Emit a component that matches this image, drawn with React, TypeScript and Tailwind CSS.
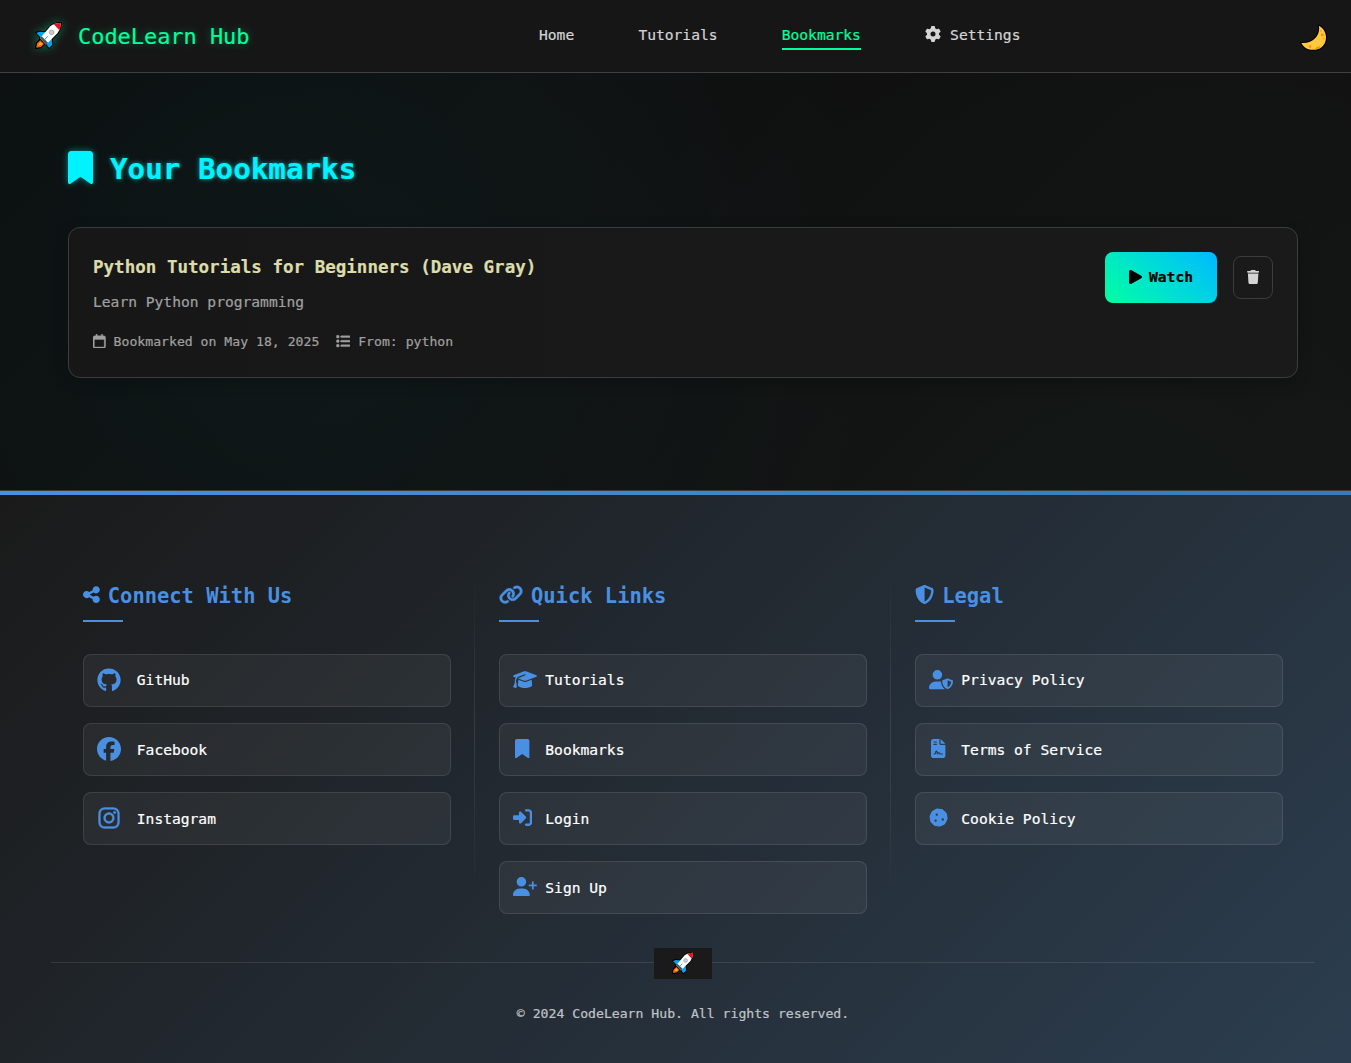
import type { ReactNode } from 'react';
import {
  FaBookmark, FaCookie, FaFacebook, FaFileContract, FaGear, FaGithub, FaGraduationCap, FaInstagram,
  FaLink, FaList, FaPlay, FaRegCalendar, FaRightToBracket, FaShareNodes, FaShieldHalved, FaTrash,
  FaUserPlus, FaUserShield,
} from 'react-icons/fa6';

function Rocket({ className }: { className: string }) {
  return (
    <svg viewBox="0 0 81 81" className={className}>
      <g stroke="#000" strokeWidth="6" strokeLinejoin="round">
        <path d="M3 78 L5 64 L15 53 L28 66 L18 76 Z" fill="#f7630c" />
        <path d="M4 32 L14 29 L32 31 L20 47 L13 43 Z" fill="#00a4ef" />
        <path d="M50 48 L52 68 L43 77 L37 72 L36 62 Z" fill="#00a4ef" />
        <path d="M15 49 L46 13 Q58 3 78 3 Q77 21 68 33 L33 68 Z" fill="#fff" />
      </g>
      <path d="M4 33 L14 29 L32 31 L20 47 L13 43 Z" fill="#00a4ef" />
      <path d="M50 48 L52 68 L43 77 L37 72 L36 62 Z" fill="#00a4ef" />
      <path d="M4 77 L6 64 L16 55 L27 66 L18 75 Z" fill="#f7630c" />
      <path d="M9 71 L16 60 L23 67 Z" fill="#fcb827" />
      <path d="M15 49 L46 13 Q58 3 78 3 Q77 21 68 33 L33 68 Z" fill="#fff" />
      <path d="M56 6 Q66 3 78 3 Q77 15 73 25 Z" fill="#e81224" />
      <path d="M15 49 L20 43 L39 62 L33 68 Z" fill="#4a5459" />
      <circle cx="50" cy="31" r="7" fill="#cccccc" stroke="#a5a5a5" strokeWidth="2.5" />
      <path d="M28 54 L38 43" stroke="#00a4ef" strokeWidth="3" />
    </svg>
  );
}

function Moon() {
  return (
    <svg viewBox="0 0 80 80" className="h-[27px] w-[27px]">
      <path d="M56 5 C82 18 84 55 62 70 C42 82 14 77 4 56 C32 60 62 38 56 5 Z" fill="#ffc83d" stroke="#000" strokeWidth="7" strokeLinejoin="round" />
      <path d="M56 5 C82 18 84 55 62 70 C42 82 14 77 4 56 C32 60 62 38 56 5 Z" fill="#ffc83d" />
      <g fill="#eb9e0c">
        <circle cx="66" cy="32" r="4.5" />
        <circle cx="62" cy="20" r="2.5" />
        <circle cx="70" cy="43" r="2.5" />
        <path d="M44 75 Q49 64 58 66 Q61 69 58 72 Q52 76 44 75 Z" />
        <circle cx="30" cy="67" r="4" />
      </g>
    </svg>
  );
}

type Item = { label: string; icon: ReactNode };

const wideGlyph = 'h-[19.2px] w-6 shrink-0';
const squareGlyph = 'size-[19.2px] shrink-0';
const narrowGlyph = 'h-[19.2px] w-[14.4px] shrink-0';

const social: Item[] = [
  { label: 'GitHub', icon: <FaGithub className="size-6" /> },
  { label: 'Facebook', icon: <FaFacebook className="size-6" /> },
  { label: 'Instagram', icon: <FaInstagram className="size-6 stroke-current stroke-[8]" /> },
];
const quick: Item[] = [
  { label: 'Tutorials', icon: <FaGraduationCap className={wideGlyph} /> },
  { label: 'Bookmarks', icon: <FaBookmark className={narrowGlyph} /> },
  { label: 'Login', icon: <FaRightToBracket className={squareGlyph} /> },
  { label: 'Sign Up', icon: <FaUserPlus className={wideGlyph} /> },
];
const legal: Item[] = [
  { label: 'Privacy Policy', icon: <FaUserShield className={wideGlyph} /> },
  { label: 'Terms of Service', icon: <FaFileContract className={narrowGlyph} /> },
  { label: 'Cookie Policy', icon: <FaCookie className={squareGlyph} /> },
];

function Column({ title, icon, items, wide, divider }: { title: string; icon: ReactNode; items: Item[]; wide?: boolean; divider?: boolean }) {
  return (
    <section className="relative">
      <h3 className="flex h-[35px] items-start gap-2 text-[20.46px] leading-7 font-bold text-[#4a90e2] [-webkit-text-stroke:0px]">
        <span className="mt-[3px]">{icon}</span>
        {title}
      </h3>
      <div className="mt-[3px] h-0.5 w-10 bg-[#4a90e2]" />
      <ul className="mt-8 flex flex-col gap-4">
        {items.map((item, i) => (
          <li key={item.label} className={`flex h-[53px] items-center rounded-lg border border-white/10 bg-white/5 pl-[12.8px] text-[14.62px] font-medium text-white ${wide ? 'gap-4' : 'gap-[8.5px]'}`}>
            <span className={`flex w-6 shrink-0 text-[#4a90e2] ${wide || i === 0 ? 'pb-px' : 'pb-[2px]'}`}>
              <span className={wide ? 'flex w-6 justify-center' : 'flex min-w-[19.2px] justify-center'}>{item.icon}</span>
            </span>
            <span className={i > 0 ? '' : 'pb-[2px]'}>{item.label}</span>
          </li>
        ))}
      </ul>
      {divider && <div className="absolute top-[-16px] -right-6 h-[332px] w-px bg-linear-to-b from-transparent via-white/10 to-transparent" />}
    </section>
  );
}

export default function App() {
  return (
    <div className="h-[1063px] w-full overflow-hidden bg-[#111111] font-['DejaVu_Sans_Mono',monospace] [-webkit-text-stroke:0.2px]">
      <div className="flex h-full w-[1366px] flex-col">
        <header className="flex h-[73px] shrink-0 items-center border-b border-[#404040] bg-[#161616] pl-[35px]">
          <div className="flex w-[504px] items-center gap-4 text-[21.92px] text-[#00ff9d]">
            <Rocket className="mb-px h-[27px] w-[27px] drop-shadow-[0_0_5px_rgba(0,255,157,0.4)]" />
            <span className="pt-[3px] text-shadow-[0_0_10px_rgba(0,255,157,0.35)]">CodeLearn Hub</span>
          </div>
          <nav className="flex h-[72px] gap-[64.2px] pt-[22px] text-[14.62px] leading-[26px] text-[#d4d4d4]">
            <a>Home</a>
            <a>Tutorials</a>
            <a className="h-7 border-b-2 border-[#00ff9d] text-[#00ff9d]">Bookmarks</a>
            <a className="flex gap-[9px]"><FaGear className="mt-1 size-4" />Settings</a>
          </nav>
          <div className="ml-auto flex w-[66px] pt-[2px]"><Moon /></div>
        </header>

        <main className="h-[417px] shrink-0 bg-[radial-gradient(circle_at_280px_210px,rgba(0,240,255,0.045),transparent_620px),radial-gradient(circle_at_1100px_520px,rgba(0,255,157,0.025),transparent_600px),linear-gradient(135deg,#0c0c0c,#141414)] px-[68px] pt-[77px]">
          <h1 className="flex h-[34px] items-center gap-[17px] text-[29.23px] font-bold text-[#00f3ff] text-shadow-[0_0_5px_rgba(0,243,255,0.6)]">
            <FaBookmark className="h-[33px] w-[25px] drop-shadow-[0_0_3px_rgba(0,243,255,0.5)]" preserveAspectRatio="none" />
            <span className="pt-1.5">Your Bookmarks</span>
          </h1>
          <article className="mt-[43px] flex h-[151px] w-[1230px] justify-between rounded-xl border border-[#3c3c3c] bg-linear-to-r from-[#171717] to-[#1a1a1a] p-6 shadow-[0_4px_15px_rgba(0,0,0,0.2)]">
            <div>
              <h2 className="h-[36px] text-[17.54px] leading-[31px] font-bold text-[#dcdcaa]">Python Tutorials for Beginners (Dave Gray)</h2>
              <p className="h-10 text-[14.62px] leading-7 text-[#a0a0a0]">Learn Python programming</p>
              <div className="flex h-[26px] items-center gap-[16.5px] text-[13.15px] text-[#a0a0a0]">
                <span className="flex items-center gap-2"><FaRegCalendar className="h-[14.4px] w-[12.6px] stroke-current stroke-[14]" /><span className="pt-px">Bookmarked on May 18, 2025</span></span>
                <span className="flex items-center gap-2"><FaList className="size-[14.4px] stroke-current stroke-[14]" /><span className="pt-px">From: python</span></span>
              </div>
            </div>
            <div className="flex h-[51px] items-center gap-4">
              <button className="flex h-[51px] w-28 items-center justify-center gap-[7px] rounded-lg bg-linear-45 from-[#00ff9d] to-[#00b8ff] text-[14.62px] font-bold text-black">
                <FaPlay className="mb-px h-4 w-[13px]" preserveAspectRatio="none" /><span className="pb-[2px]">Watch</span>
              </button>
              <button className="flex h-[43px] w-10 items-center justify-center rounded-lg border border-[#3c3c3c] pb-px text-[#d4d4d4]">
                <FaTrash className="h-[14px] w-[12.25px]" />
              </button>
            </div>
          </article>
        </main>

        <footer className="flex grow flex-col border-t border-[#3c3c3c] bg-linear-135 from-[#1a1a1a] to-[#2c3e50]">
          <div className="h-1 w-full shrink-0 bg-linear-to-r from-[#4a90e2] to-[#357abd]" />
          <div className="mx-auto grid h-[453px] w-[1200px] grid-cols-3 gap-12 pt-[87px]">
            <Column title="Connect With Us" icon={<FaShareNodes className="h-[19.2px] w-[16.8px]" />} items={social} wide divider />
            <Column title="Quick Links" icon={<FaLink className="h-[19.2px] w-6 shrink-0 stroke-current stroke-[12]" />} items={quick} divider />
            <Column title="Legal" icon={<FaShieldHalved className={squareGlyph} />} items={legal} />
          </div>
          <div className="mx-auto flex h-[31px] w-[1264px]">
            <div className="mt-[14px] h-px grow bg-white/10" />
            <div className="flex h-[31px] w-[58px] items-center justify-center bg-[#1a1a1a] pb-[2px]"><Rocket className="h-[22px] w-[22px]" /></div>
            <div className="mt-[14px] h-px grow bg-white/10" />
          </div>
          <p className="mt-6 text-center text-[13.15px] leading-[22px] text-[#c0c3c6]">© 2024 CodeLearn Hub. All rights reserved.</p>
        </footer>
      </div>
    </div>
  );
}
